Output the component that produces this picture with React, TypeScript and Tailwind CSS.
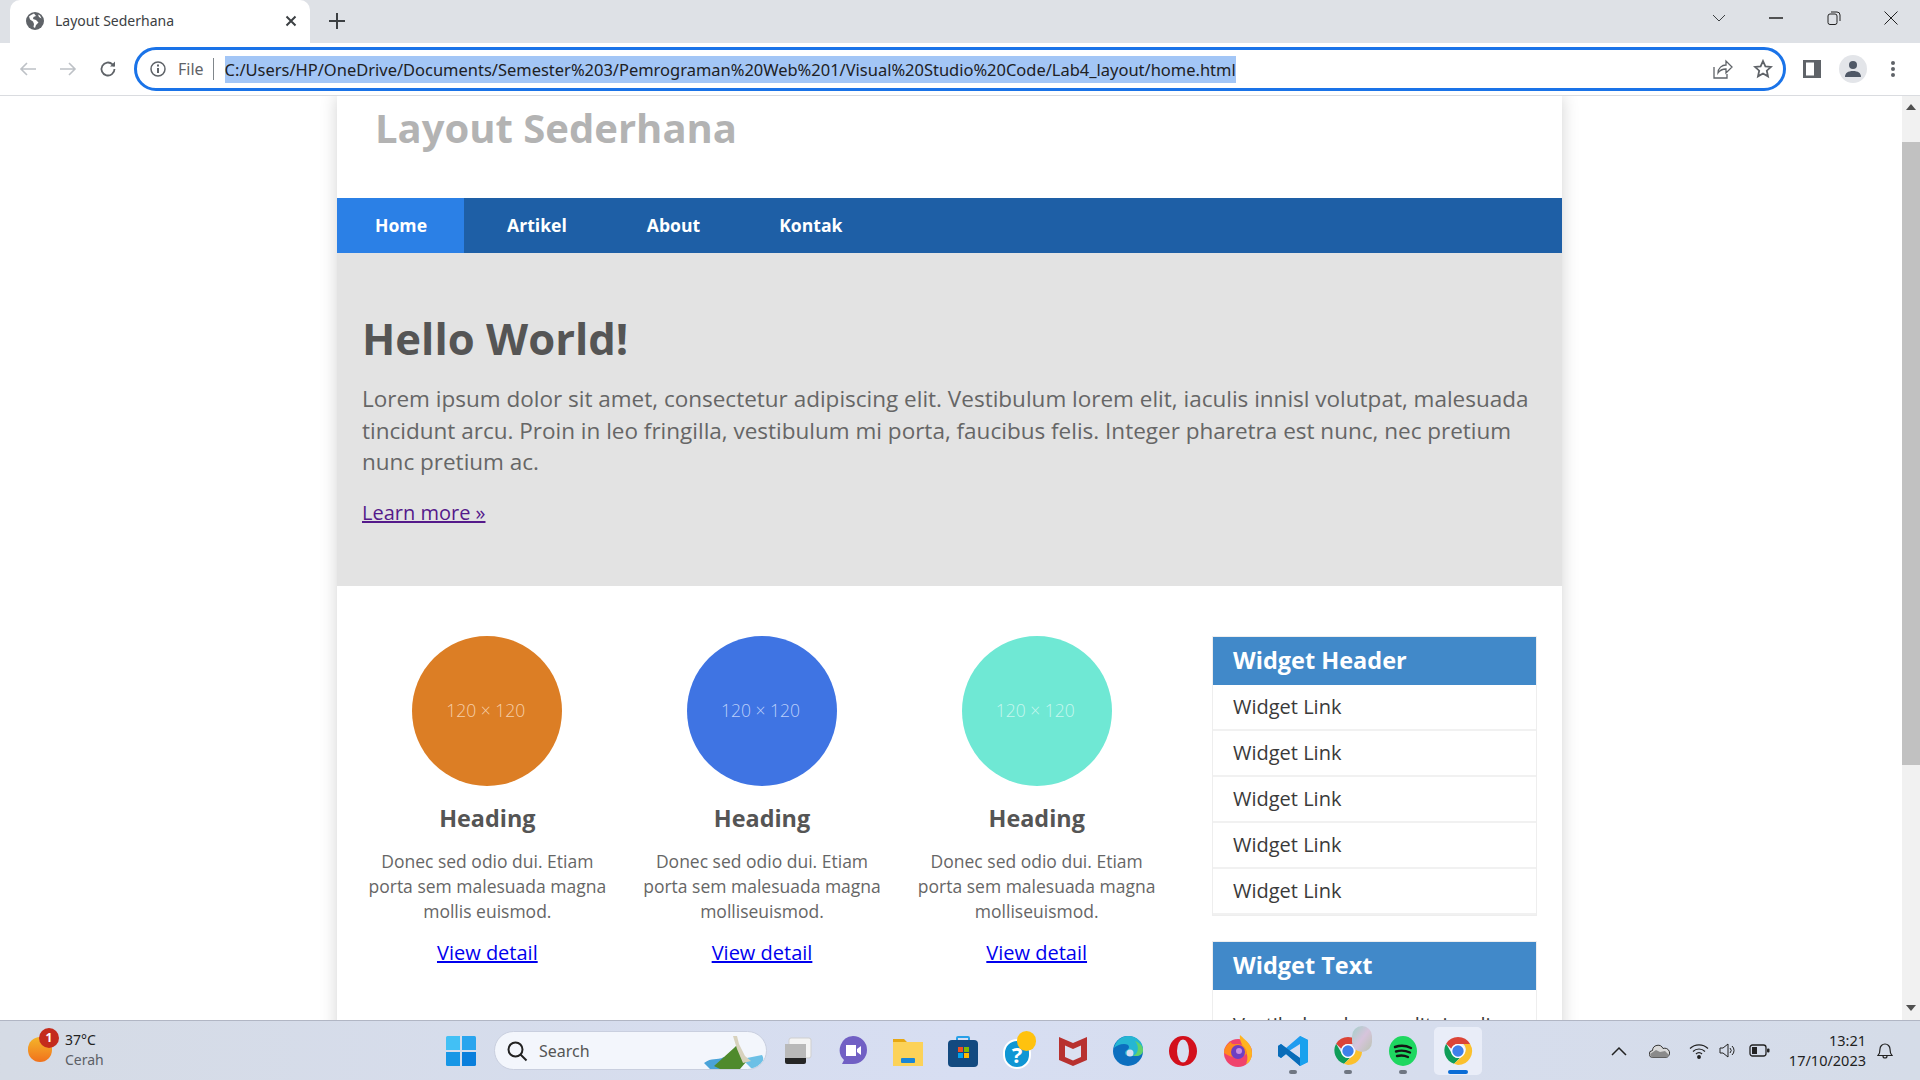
import React from "react";

const ChromeIcon = ({ size = 32 }: { size?: number }) => (
  <svg width={size} height={size} viewBox="0 0 48 48">
    <path d="M24 3a21 21 0 0 1 18.2 10.5H24a10.5 10.5 0 0 0-10 7.3L6.200 13A21 21 0 0 1 24 3z" fill="#db4437" />
    <path d="M6.200 13l9.100 15.800A10.500 10.500 0 0 0 27 34l-8.900 9.200A21 21 0 0 1 6.200 13z" fill="#0f9d58" />
    <path d="M42.200 13.500A21 21 0 0 1 24 45l-5.900-1.800L33 28.800a10.500 10.500 0 0 0-1-15.300z" fill="#fbc02d" />
    <circle cx="24" cy="24" r="10.500" fill="#fff" />
    <circle cx="24" cy="24" r="8.500" fill="#3f80ea" />
  </svg>
);

const TaskSlot = ({ children, dot }: { children: React.ReactNode; dot?: boolean }) => (
  <div className="relative flex h-full w-[55px] items-center justify-center">
    {children}
    {dot && <span className="absolute bottom-[6px] left-[24px] h-[4px] w-[8px] rounded-full bg-[#6f7682]" />}
  </div>
);

const Card = ({ color, label, text }: { color: string; label: string; text: string }) => (
  <div className="flex w-[275px] flex-col items-center">
    <div className={`flex h-[150px] w-[150px] items-center justify-center rounded-full pr-[3px] ${color}`}>
      <span className={`text-[17.5px] font-light leading-none ${label}`}>120 × 120</span>
    </div>
    <h2 className="mt-[16px] text-[23.4px] font-bold leading-[32px] text-[#555555]">Heading</h2>
    <p className="mt-[15px] w-[250px] text-center text-[17.5px] leading-[25px] text-[#666666]">{text}</p>
    <a href="#" className="mt-[15px] text-[20px] leading-[28px] text-[#0000ee] underline">View detail</a>
  </div>
);

const WidgetRow = () => (
  <div className="flex h-[46px] items-center border-b-2 border-[#f1f1f1] pl-[20px] text-[20px] text-[#3a3a3a]">Widget Link</div>
);

export default function App() {
  return (
    <div className="flex h-screen w-full flex-col overflow-hidden bg-white font-['Open_Sans',sans-serif]">
      {/* tab strip */}
      <div className="flex h-[43px] shrink-0 items-end bg-[#dee1e6] pl-[10px] font-['Noto_Sans',sans-serif]">
        <div className="flex h-[43px] w-[300px] items-center rounded-t-[10px] bg-white pb-[2px] pl-[16px] pr-[13px]">
          <svg width="18" height="18" viewBox="0 0 18 18">
            <circle cx="9" cy="9" r="9" fill="#5f6368" />
            <path d="M8 1.500 5 3 3 4.500 4 7.500 7 9.500 8 12 7.500 15 9 16 10 13 12.500 10.500 10 8 7 7 7.500 5 10 4zM12 2.500 13 5 15.500 6.500 14 3.500z" fill="#fff" />
          </svg>
          <span className="ml-[11px] flex-1 whitespace-nowrap text-[14px] text-[#3c4043]">Layout Sederhana</span>
          <svg width="12" height="12" viewBox="0 0 12 12" stroke="#3c4043" strokeWidth="2"><path d="M1.500 1.500l9 9M10.500 1.500l-9 9" /></svg>
        </div>
        <div className="mb-[8px] ml-[17px] flex h-[28px] w-[20px] items-center justify-center">
          <svg width="16" height="16" viewBox="0 0 16 16" stroke="#3c4043" strokeWidth="2"><path d="M8 0v16M0 8h16" /></svg>
        </div>
        <div className="mb-[16px] ml-auto flex h-[18px] items-center">
          <svg width="14" height="8" viewBox="0 0 14 8" fill="none" stroke="#3c4043"><path d="M1 1l6 6 6-6" /></svg>
          <svg className="ml-[43px]" width="14" height="2" viewBox="0 0 14 2"><path d="M0 1h14" stroke="#222" strokeWidth="1.500" /></svg>
          <svg className="ml-[44px]" width="14" height="14" viewBox="0 0 14 14" fill="none" stroke="#222"><rect x="1" y="3" width="9" height="10.500" rx="2" /><path d="M4 1h6a3 3 0 0 1 3 3v6" /></svg>
          <svg className="ml-[43px] mr-[22px]" width="14" height="14" viewBox="0 0 14 14" stroke="#222"><path d="M0.500 0.500l13 13M13.500 0.500l-13 13" /></svg>
        </div>
      </div>

      {/* toolbar */}
      <div className="flex h-[53px] shrink-0 items-center border-b border-[#dadce0] bg-white font-['Noto_Sans',sans-serif]">
        <div className="flex w-[134px] shrink-0 items-center pl-[19px]">
          <svg width="18" height="18" viewBox="0 0 18 18" fill="none" stroke="#bdc1c6" strokeWidth="1.600"><path d="M17 9H2M8 3L2 9l6 6" /></svg>
          <svg className="ml-[22px]" width="18" height="18" viewBox="0 0 18 18" fill="none" stroke="#bdc1c6" strokeWidth="1.600"><path d="M1 9h15M10 3l6 6-6 6" /></svg>
          <svg className="ml-[22px]" width="18" height="18" viewBox="0 0 18 18" fill="none" stroke="#5f6368" strokeWidth="1.800"><path d="M15.500 9a6.500 6.500 0 1 1-2-4.700L15.500 6" /><path d="M16 1.500V6.500H11" fill="#5f6368" stroke="none" /></svg>
        </div>
        <div className="flex h-[44px] w-[1652px] items-center rounded-full border-[3px] border-[#1a73e8] pl-[13px] pr-[10px]">
          <svg width="16" height="16" viewBox="0 0 16 16" fill="none" stroke="#5f6368" strokeWidth="1.500"><circle cx="8" cy="8" r="7" /><path d="M8 7v5" strokeWidth="2" /><path d="M8 3.500v2" strokeWidth="2" /></svg>
          <span className="ml-[12px] text-[16px] text-[#5f6368]">File</span>
          <span className="ml-[9px] h-[22px] w-px bg-[#80868b]" />
          <span className="ml-[11px] whitespace-nowrap bg-[#a3c6f6] text-[16.48px] leading-[27px] text-[#202124]">C:/Users/HP/OneDrive/Documents/Semester%203/Pemrograman%20Web%201/Visual%20Studio%20Code/Lab4_layout/home.html</span>
          <svg className="ml-auto" width="20" height="20" viewBox="0 0 20 20" fill="none" stroke="#5f6368" strokeWidth="1.300"><path d="M1 8v11h13v-4" /><path d="M5 14c0-5 4-8 8-8V2l6 6-6 6v-4c-4 0-6 1-8 4z" /></svg>
          <svg className="ml-[20px]" width="20" height="20" viewBox="0 0 20 20" fill="none" stroke="#5f6368" strokeWidth="1.800"><path d="M10 2l2.400 5.300 5.600.6-4.200 3.800 1.200 5.700-5-2.900-5 2.900 1.200-5.700L2 7.900l5.600-.6z" /></svg>
        </div>
        <svg className="ml-[17px]" width="18" height="18" viewBox="0 0 18 18"><path d="M0 0h18v18H0z" fill="#5f6368" /><path d="M3 2.500h8v13H3z" fill="#fff" /></svg>
        <div className="ml-[18px] flex h-[28px] w-[28px] items-center justify-center rounded-full bg-[#e3e5e9]">
          <svg width="16" height="18" viewBox="0 0 16 18" fill="#4f5866"><circle cx="8" cy="5" r="4" /><path d="M0 17c0-4 3-6 8-6s8 2 8 6z" /></svg>
        </div>
        <svg className="ml-[23px]" width="6" height="18" viewBox="0 0 6 18" fill="#5f6368"><circle cx="3" cy="3" r="2" /><circle cx="3" cy="9" r="2" /><circle cx="3" cy="15" r="2" /></svg>
      </div>

      {/* viewport */}
      <div className="flex min-h-0 flex-1">
        <div className="min-w-0 flex-1 overflow-hidden">
          <div className="ml-[337px] h-[1100px] w-[1225px] bg-white shadow-[0_0_16px_rgba(0,0,0,0.18)]">
            <header className="h-[102px] pl-[38px] pt-[4px]">
              <h1 className="text-[40px] font-bold leading-[55px] text-[#b3b3b3]">Layout Sederhana</h1>
            </header>
            <nav className="flex h-[55px] items-center bg-[#1e5fa6] text-[17.6px] font-bold text-white">
              <a className="flex h-full w-[127px] items-center bg-[#2b80e6] pl-[38px]">Home</a>
              <a className="ml-[43px]">Artikel</a>
              <a className="ml-[80px]">About</a>
              <a className="ml-[79px]">Kontak</a>
            </nav>
            <section className="h-[333px] bg-[#e3e3e3] pl-[25px] pr-[25px] pt-[57px]">
              <h1 className="text-[43.6px] font-bold leading-[56px] text-[#555555]">Hello World!</h1>
              <p className="mt-[17px] text-[22.5px] leading-[31.5px] text-[#666666]">
                Lorem ipsum dolor sit amet, consectetur adipiscing elit. Vestibulum lorem elit, iaculis innisl volutpat, malesuada tincidunt arcu. Proin in leo fringilla, vestibulum mi porta, faucibus felis. Integer pharetra est nunc, nec pretium nunc pretium ac.
              </p>
              <a href="#" className="mt-[21px] block text-[20px] leading-[28px] text-[#551a8b] underline">Learn more »</a>
            </section>
            <div className="flex pl-[13px] pt-[50px]">
              <div className="flex w-[824px]">
                <Card color="bg-[#dc7e25]" label="text-[#f6cfa9]" text="Donec sed odio dui. Etiam porta sem malesuada magna mollis euismod." />
                <Card color="bg-[#3f74e3]" label="text-[#bccffa]" text="Donec sed odio dui. Etiam porta sem malesuada magna molliseuismod." />
                <Card color="bg-[#6fe8d4]" label="text-[#c6f7ef]" text="Donec sed odio dui. Etiam porta sem malesuada magna molliseuismod." />
              </div>
              <aside className="ml-[38px] w-[325px]">
                <div className="border border-[#eeeeee]">
                  <div className="flex h-[48px] items-center bg-[#4189c9] pb-[1px] pl-[20px] text-[23.5px] font-bold text-white">Widget Header</div>
                  <WidgetRow /><WidgetRow /><WidgetRow /><WidgetRow /><WidgetRow />
                </div>
                <div className="mt-[25px] border border-[#eeeeee]">
                  <div className="flex h-[48px] items-center bg-[#4189c9] pb-[1px] pl-[20px] text-[23.5px] font-bold text-white">Widget Text</div>
                  <p className="px-[20px] pt-[20px] text-[20px] text-[#3a3a3a]">Vestibulum lorem elit, iaculis in nisl</p>
                </div>
              </aside>
            </div>
          </div>
        </div>
        {/* scrollbar */}
        <div className="flex w-[18px] shrink-0 flex-col bg-[#f1f1f1]">
          <div className="flex h-[22px] items-center justify-center"><span className="h-0 w-0 border-x-[5px] border-b-[6px] border-x-transparent border-b-[#505050]" /></div>
          <div className="mt-[24px] h-[623px] bg-[#c1c1c1]" />
          <div className="mt-auto flex h-[24px] items-center justify-center"><span className="h-0 w-0 border-x-[5px] border-t-[6px] border-x-transparent border-t-[#505050]" /></div>
        </div>
      </div>

      {/* taskbar */}
      <div className="flex h-[60px] shrink-0 items-center border-t border-[#b1b6c4] bg-gradient-to-r from-[#d5dbe5] via-[#d7def2] to-[#d5dce8] font-['Noto_Sans',sans-serif]">
        <div className="relative flex w-[433px] shrink-0 items-center pl-[28px]">
          <span className="mt-[-2px] block h-[25px] w-[24px] rounded-full bg-gradient-to-b from-[#f3b52a] to-[#f0711c]" />
          <span className="absolute left-[39px] top-[-2px] flex h-[20px] w-[20px] items-center justify-center rounded-full bg-[#c42b1c] text-[12px] font-bold text-white">1</span>
          <div className="mb-[2px] ml-[13px] flex flex-col text-[14px] leading-[20px]">
            <span className="text-[#222]">37°C</span>
            <span className="text-[#5c5f66]">Cerah</span>
          </div>
        </div>
        <div className="flex w-[61px] shrink-0 justify-center pr-[6px]">
          <svg width="30" height="30" viewBox="0 0 30 30">
            <path d="M0 1.500A1.500 1.500 0 0 1 1.500 0H14v14H0z" fill="#42c0f5" />
            <path d="M16 0h12.500A1.500 1.500 0 0 1 30 1.500V14H16z" fill="#2aa5ee" />
            <path d="M0 16h14v14H1.500A1.500 1.500 0 0 1 0 28.500z" fill="#1797e6" />
            <path d="M16 16h14v12.500a1.500 1.500 0 0 1-1.500 1.500H16z" fill="#0a7fdc" />
          </svg>
        </div>
        <div className="relative flex h-[39px] w-[273px] shrink-0 items-center overflow-hidden rounded-full border border-[#c9cfdf] bg-[#f3f6fc] pl-[11px]">
          <svg width="22" height="22" viewBox="0 0 22 22" fill="none" stroke="#222" strokeWidth="2"><circle cx="9.500" cy="9.500" r="7" /><path d="M14.500 14.500l6 6" /></svg>
          <span className="ml-[11px] text-[16px] text-[#555]">Search</span>
          <svg className="absolute bottom-0 right-0" width="64" height="36" viewBox="0 0 64 36">
            <path d="M2 30c8-6 12-2 20-6l14 12H8z" fill="#4aa3d8" />
            <path d="M40 26l20-4c4 6-2 12-10 14z" fill="#6cc0e6" />
            <path d="M12 33L32 15l4-4 8 18-6 7H18z" fill="#4f8a2c" />
            <path d="M31 3h4l2 8 6 12 6 5-8 2-6-14z" fill="#d8d2bd" />
          </svg>
        </div>
        <div className="flex h-full shrink-0 items-center pl-[3px]">
          <TaskSlot>
            <svg width="30" height="30" viewBox="0 0 30 30"><rect x="6" y="2" width="22" height="20" rx="2" fill="#f4f4f4" stroke="#cfcfcf" /><rect x="2" y="8" width="21" height="20" rx="2" fill="#262626" /><rect x="2" y="8" width="21" height="14" fill="#b9b9b9" /></svg>
          </TaskSlot>
          <TaskSlot>
            <svg width="30" height="32" viewBox="0 0 30 32"><path d="M15 1a14 14 0 0 1 0 28H4l2-4A14 14 0 0 1 15 1z" fill="#7160c4" /><path d="M8 10h10v11H8z" fill="#fff" /><path d="M19 14l4-3v9l-4-3z" fill="#fff" /></svg>
          </TaskSlot>
          <TaskSlot>
            <svg width="30" height="30" viewBox="0 0 30 30"><path d="M0 3h11l3 3h16v4H0z" fill="#e7a813" /><path d="M0 6h30v24H0z" fill="#fcd258" /><rect x="8" y="22" width="14" height="5" rx="1" fill="#1a86d6" /></svg>
          </TaskSlot>
          <TaskSlot>
            <svg width="30" height="32" viewBox="0 0 30 32"><path d="M9 7V3a1 1 0 0 1 1-1h10a1 1 0 0 1 1 1v4" fill="none" stroke="#28a0e8" strokeWidth="2" /><rect x="0" y="5" width="30" height="27" rx="4" fill="#134a80" /><path d="M10 12h5v5h-5z" fill="#f25022" /><path d="M16 12h5v5h-5z" fill="#7fba00" /><path d="M10 18h5v5h-5z" fill="#00a4ef" /><path d="M16 18h5v5h-5z" fill="#ffb900" /></svg>
          </TaskSlot>
          <TaskSlot>
            <div className="relative ml-[3px] flex h-[38px] w-[32px] items-end">
              <span className="mb-px flex h-[30px] w-[28px] items-center justify-center rounded-full border-2 border-white bg-[#0f96d4] text-[22px] font-bold leading-none text-white">?</span>
              <span className="absolute right-[-1px] top-[-1px] h-[20px] w-[19px] rounded-full bg-[#ffc20e]" />
            </div>
          </TaskSlot>
          <TaskSlot>
            <svg width="28" height="30" viewBox="0 0 28 30"><path d="M0 1l14 6 14-6v23l-14 6-14-6z" fill="#b8312f" /><path d="M6 9.500l8 3.500 8-3.500V21l-8 3.500L6 21z" fill="#dbe0f1" /></svg>
          </TaskSlot>
          <TaskSlot>
            <svg width="30" height="30" viewBox="0 0 30 30"><circle cx="15" cy="15" r="15" fill="#0c6fbf" /><path d="M1 12C3 4 9 0 15 0c9 0 15 6 15 13 0 5-4 7-8 7h-6c-2 0-4-1-4-3 0-3 4-3 4-6 0-2-2-3-5-3-4 0-8 2-10 4z" fill="#25b6d3" /><path d="M22 5c5 2 8 5 8 9 0 4-3 6-7 6h-3c5-2 7-9 2-15z" fill="#62d16a" /><circle cx="17" cy="17" r="3.500" fill="#d7def2" /></svg>
          </TaskSlot>
          <TaskSlot>
            <svg width="28" height="30" viewBox="0 0 28 30"><ellipse cx="14" cy="15" rx="14" ry="15" fill="#d3101c" /><ellipse cx="14" cy="15" rx="6" ry="11.500" fill="#d7def2" /></svg>
          </TaskSlot>
          <TaskSlot>
            <svg width="30" height="32" viewBox="0 0 30 32"><circle cx="15" cy="18" r="14" fill="#f0436c" /><path d="M17 0c5 5 12 9 12 18 0 6-3 10-6 11 3-6 1-13-3-16C19 8 16 5 17 0z" fill="#ffb41f" /><path d="M1 18c0-5 3-9 7-11 0 3 4 2 7 2 5 0 9 5 9 9-3 5-15 6-23 0z" fill="#ff8a1f" /><circle cx="15" cy="17" r="7" fill="#6f3fc2" /><circle cx="16" cy="16" r="3" fill="#c98de0" /></svg>
          </TaskSlot>
          <TaskSlot dot>
            <svg width="30" height="30" viewBox="0 0 30 30"><path d="M22 0l8 4v22l-8 4-14-12-5 4-3-2v-10l3-2 5 4z" fill="#1f9cf0" /><path d="M22 8L11 15l11 7z" fill="#d7def2" /><path d="M22 0l8 4v22l-8 4z" fill="#1aa1ee" /><path d="M0 10l3-2 19 14-0 8-14-12-5 4-3-2z" fill="#0a6cb8" /></svg>
          </TaskSlot>
          <TaskSlot dot>
            <div className="relative">
              <ChromeIcon />
              <span className="absolute right-[-8px] top-[-9px] h-[26px] w-[20px] rounded-full bg-gradient-to-br from-[#9fd0c8] via-[#d7c4dc] to-[#b9c4b0]" />
            </div>
          </TaskSlot>
          <TaskSlot dot>
            <svg width="28" height="30" viewBox="0 0 28 30"><ellipse cx="14" cy="15" rx="14" ry="15" fill="#1ed760" /><path d="M6 11c6-2 11-1.500 16 1M7 15.500c5-1.500 9.500-1 14 1M8 20c4-1 7.500-.7 11 1" fill="none" stroke="#151515" strokeWidth="2.400" strokeLinecap="round" /></svg>
          </TaskSlot>
          <div className="relative ml-[4px] flex h-[48px] w-[48px] items-center justify-center rounded-[5px] bg-[#e9edf8]">
            <ChromeIcon />
            <span className="absolute bottom-[1px] left-[14px] h-[4px] w-[20px] rounded-full bg-[#0a6cd6]" />
          </div>
        </div>
        <div className="ml-auto flex items-center pr-[27px]">
          <svg width="16" height="10" viewBox="0 0 16 10" fill="none" stroke="#222" strokeWidth="1.500"><path d="M1 9l7-7 7 7" /></svg>
          <svg className="ml-[22px]" width="21" height="14" viewBox="0 0 21 14"><path d="M4 13.500a3.500 3.500 0 0 1-.500-7 5.500 5.500 0 0 1 10.500-2 4.500 4.500 0 0 1 3.500 9z" fill="#d9d9d9" stroke="#333" /><path d="M1 10l6-4 4 2 5-1 4 4-2 2.500H3z" fill="#8a8a8a" /></svg>
          <svg className="ml-[19px]" width="20" height="16" viewBox="0 0 20 16" fill="none" stroke="#222" strokeWidth="1.200"><path d="M1 5.500a13 13 0 0 1 18 0M4 8.500a8.500 8.500 0 0 1 12 0M7 11a4 4 0 0 1 6 0" /><circle cx="10" cy="14" r="1.300" fill="#222" /></svg>
          <svg className="ml-[10px]" width="19" height="15" viewBox="0 0 19 15" fill="none" stroke="#222"><path d="M1 5h3l5-4v13l-5-4H1z" /><path d="M11 5a3.500 3.500 0 0 1 0 5M13 3a6 6 0 0 1 0 9" /></svg>
          <svg className="ml-[11px]" width="21" height="13" viewBox="0 0 21 13"><rect x="1" y="1" width="16" height="11" rx="2.500" fill="none" stroke="#222" strokeWidth="1.300" /><rect x="3" y="3" width="5" height="7" fill="#222" /><rect x="18" y="4.500" width="2.500" height="4" rx="1" fill="#222" /></svg>
          <div className="mb-[2px] ml-[19px] flex flex-col items-end text-[14.5px] leading-[20px] text-[#222]">
            <span>13:21</span>
            <span>17/10/2023</span>
          </div>
          <svg className="ml-[11px]" width="16" height="19" viewBox="0 0 16 19" fill="none" stroke="#222" strokeWidth="1.200"><path d="M1 14.500c1.500-1.500 2-3 2-6.500a5 5 0 0 1 10 0c0 3.500.5 5 2 6.500z" /><path d="M6 15a2 2 0 0 0 4 0" /></svg>
        </div>
      </div>
    </div>
  );
}
